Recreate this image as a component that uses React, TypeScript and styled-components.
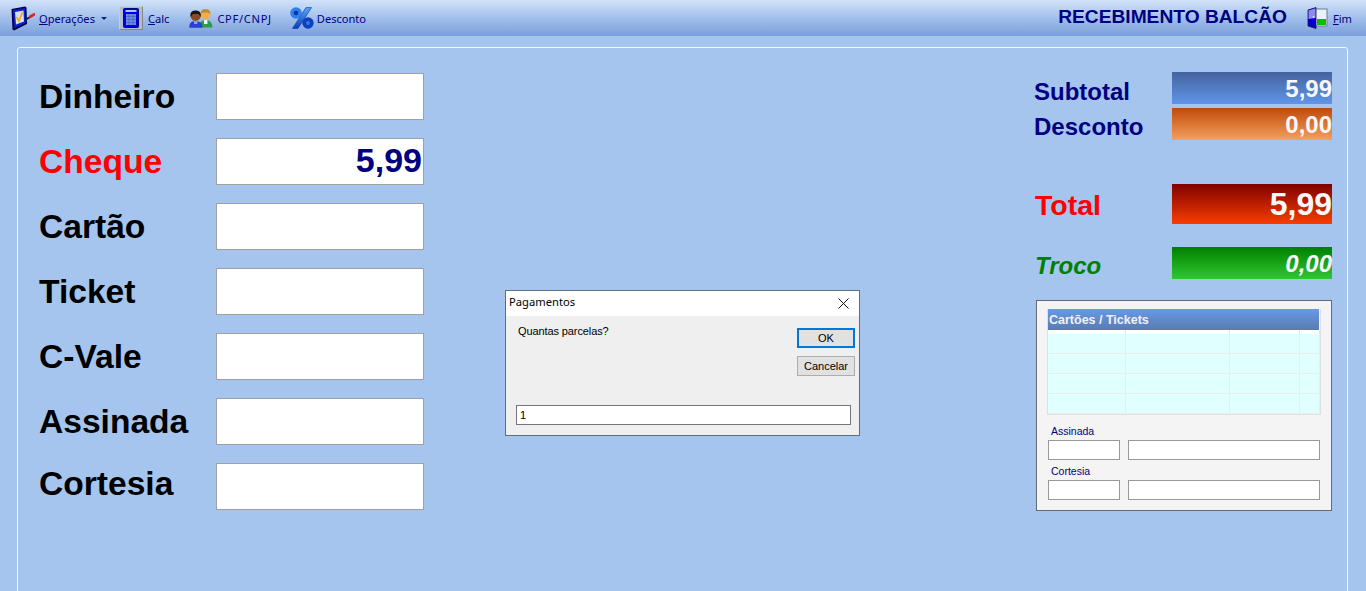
import React from "react";
import styled, { createGlobalStyle } from "styled-components";

const GlobalStyle = createGlobalStyle`
  html, body {
    margin: 0;
    padding: 0;
    background: #a5c5ee;
    overflow: hidden;
  }
`;

const UI_FONT = `"Noto Sans", "Open Sans", sans-serif`;
const BOLD_FONT = `"Liberation Sans", Arial, sans-serif`;

function OperacoesIcon() {
  return (
    <svg width="24" height="25" viewBox="0 0 24 25">
      <path d="M0.5 3 L14 0.5 L15.5 1.5 L16 18 L3 24.5 L1.5 23.5 Z" fill="#04043c" />
      <path d="M2 4 L14 2 L14.5 17 L3.5 22 Z" fill="#0a20d8" />
      <path d="M4 6 L12.5 4.5 L13 15.5 L5 18.5 Z" fill="#d4e0fa" />
      <path d="M5.5 11 L8 15 L11.5 6" fill="none" stroke="#f0b000" strokeWidth="1.7" />
      <path d="M14 14 L20 10.5" stroke="#28183c" strokeWidth="2" />
      <path d="M19.5 10.5 L23 8.5" stroke="#e02828" strokeWidth="2.8" strokeLinecap="round" />
    </svg>
  );
}

function CalcIcon() {
  return (
    <svg width="16" height="20" viewBox="0 0 16 20">
      <rect x="0.5" y="0.5" width="15" height="19" rx="1" fill="#0000e8" stroke="#08087c" />
      <rect x="2.5" y="2" width="11" height="2" fill="#a4c4f4" />
      <rect x="3" y="6" width="10" height="11" fill="#6c8cdc" />
      <path
        d="M3 8.5 H13 M3 11.5 H13 M3 14.5 H13 M6 6 V17 M10 6 V17"
        stroke="#4a64cc"
        strokeWidth="0.8"
      />
    </svg>
  );
}

function PessoasIcon() {
  return (
    <svg width="24" height="19" viewBox="0 0 24 19">
      <circle cx="16.5" cy="5.5" r="5" fill="#eeb04a" />
      <path d="M11.5 5 Q12 -0.5 16.5 0.3 Q21 -0.5 21.5 5 L19 3.5 L14 3.5 Z" fill="#c08a2a" />
      <path d="M10 18.5 Q10 11 16.5 11 Q23.5 11 23.5 18.5 Z" fill="#2f9c48" />
      <rect x="15" y="11" width="3.4" height="4" fill="#f4f4f4" />
      <circle cx="6.6" cy="7" r="5" fill="#8c4a20" />
      <path d="M1.4 8 Q0.6 1 6.6 1.4 Q12.6 1 11.8 8 L9.5 5 L4 5 Z" fill="#20120c" />
      <path d="M0.3 18.8 Q-0.2 12 6.6 12 Q13.6 12 13.4 18.8 Z" fill="#2a40d0" />
      <rect x="5" y="12" width="3.4" height="3" fill="#88a4f0" />
    </svg>
  );
}

function PercentIcon() {
  return (
    <svg width="24" height="22" viewBox="0 0 24 22">
      <defs>
        <linearGradient id="pct" x1="0" y1="0" x2="0" y2="1">
          <stop offset="0" stopColor="#58a8f4" />
          <stop offset="1" stopColor="#0b3cc8" />
        </linearGradient>
      </defs>
      <path d="M16 0.6 L21.5 0.6 L8 21.4 L2.5 21.4 Z" fill="url(#pct)" stroke="#0a2c9c" strokeWidth="0.6" />
      <circle cx="6" cy="6" r="4" fill="#0a2c9c" stroke="#2a82ec" strokeWidth="3.6" />
      <circle cx="18" cy="16" r="3.8" fill="#3a78e0" stroke="#0b40c0" strokeWidth="3.8" />
    </svg>
  );
}

function PortaIcon() {
  return (
    <svg width="21" height="22" viewBox="0 0 21 22">
      <rect x="7" y="2" width="13" height="17" fill="#e8f2f8" stroke="#6a7a90" />
      <rect x="10" y="12" width="9" height="6" fill="#00c000" />
      <path d="M1 3 L9 0.5 L9 21.5 L1 19 Z" fill="#0000d0" stroke="#101048" strokeWidth="0.8" />
      <path d="M1.5 3.4 L8.5 1.2 L8.5 11 L1.5 12 Z" fill="#8c8cea" />
      <circle cx="6.6" cy="9.8" r="0.9" fill="#f0f0ff" />
    </svg>
  );
}

function FecharIcon() {
  return (
    <svg width="11" height="11" viewBox="0 0 11 11">
      <path d="M0.5 0.5 L10.5 10.5 M10.5 0.5 L0.5 10.5" stroke="#111" strokeWidth="1" />
    </svg>
  );
}

const formas = [
  { nome: "Dinheiro", valor: "" },
  { nome: "Cheque", valor: "5,99", ativo: true },
  { nome: "Cartão", valor: "" },
  { nome: "Ticket", valor: "" },
  { nome: "C-Vale", valor: "" },
  { nome: "Assinada", valor: "" },
  { nome: "Cortesia", valor: "", alto: true },
];

export default function App() {
  return (
    <Screen>
      <GlobalStyle />
      <Toolbar>
        <ToolItem>
          <OperacoesIcon />
          <ToolText>
            <u>O</u>perações
          </ToolText>
          <Caret />
        </ToolItem>
        <ToolItem $gap={5}>
          <PressedIcon>
            <CalcIcon />
          </PressedIcon>
          <ToolText>
            <u>C</u>alc
          </ToolText>
        </ToolItem>
        <ToolItem $gap={4} $before={8}>
          <PessoasIcon />
          <ToolText $spread={0.7}>CPF/CNPJ</ToolText>
        </ToolItem>
        <ToolItem $gap={3} $before={6}>
          <PercentIcon />
          <ToolText>Desconto</ToolText>
        </ToolItem>
        <ToolTitle>RECEBIMENTO BALCÃO</ToolTitle>
        <ToolItem $gap={5}>
          <PortaIcon />
          <ToolText>
            <u>F</u>im
          </ToolText>
        </ToolItem>
      </Toolbar>

      <Panel>
        <FormColumn>
          {formas.map((f) => (
            <FormRow key={f.nome}>
              <FormLabel $ativo={f.ativo} $alto={f.alto}>
                {f.nome}
              </FormLabel>
              <FormField>{f.valor}</FormField>
            </FormRow>
          ))}
        </FormColumn>

        <SummaryColumn>
          <SummaryRow $top={0} $h={32}>
            <SummaryLabel $size={24} $color="#000080" $lh={40}>
              Subtotal
            </SummaryLabel>
            <SummaryBar $h={32} $size={24} $from="#44639f" $to="#6095e8">
              5,99
            </SummaryBar>
          </SummaryRow>
          <SummaryRow $top={4} $h={32}>
            <SummaryLabel $size={24} $color="#000080" $lh={38}>
              Desconto
            </SummaryLabel>
            <SummaryBar $h={32} $size={24} $from="#c04a08" $to="#f4a060">
              0,00
            </SummaryBar>
          </SummaryRow>
          <SummaryRow $top={44} $h={40}>
            <SummaryLabel $size={28.5} $color="#ff0000" $lh={42} $indent={1}>
              Total
            </SummaryLabel>
            <SummaryBar $h={40} $size={32} $from="#800000" $to="#f83e00">
              5,99
            </SummaryBar>
          </SummaryRow>
          <SummaryRow $top={23} $h={32}>
            <SummaryLabel $size={24} $color="#008000" $italic $lh={38} $indent={1}>
              Troco
            </SummaryLabel>
            <SummaryBar $h={32} $size={24} $from="#008000" $to="#30c830" $italic>
              0,00
            </SummaryBar>
          </SummaryRow>

          <CardBox>
            <CardGrid>
              <CardHeader>Cartões / Tickets</CardHeader>
              <CardTicks>
                <i />
                <i />
                <i />
                <i />
              </CardTicks>
              {[0, 1, 2, 3].map((r) => (
                <CardRow key={r}>
                  <i />
                  <i />
                  <i />
                  <i />
                </CardRow>
              ))}
            </CardGrid>
            <SmallLabel>Assinada</SmallLabel>
            <SmallFields>
              <SmallInput />
              <SmallInput />
            </SmallFields>
            <SmallLabel>Cortesia</SmallLabel>
            <SmallFields>
              <SmallInput />
              <SmallInput />
            </SmallFields>
          </CardBox>
        </SummaryColumn>
      </Panel>

      <Dialog>
        <DialogTitle>
          <span>Pagamentos</span>
          <FecharIcon />
        </DialogTitle>
        <DialogBody>
          <DialogTop>
            <DialogQuestion>Quantas parcelas?</DialogQuestion>
            <DialogButtons>
              <DialogButton $primary>OK</DialogButton>
              <DialogButton>Cancelar</DialogButton>
            </DialogButtons>
          </DialogTop>
          <DialogInput>1</DialogInput>
        </DialogBody>
      </Dialog>
    </Screen>
  );
}

const Screen = styled.div`
  position: relative;
  width: 1366px;
  height: 591px;
  overflow: hidden;
  background: #a5c5ee;
`;

const Toolbar = styled.div`
  display: flex;
  align-items: center;
  box-sizing: border-box;
  height: 36px;
  padding: 0 14px 0 11px;
  gap: 12px;
  background: linear-gradient(#d2e3f9, #9dbcea 55%, #7b9fdb);
`;

const ToolItem = styled.div<{ $gap?: number; $before?: number }>`
  display: flex;
  align-items: center;
  gap: ${(p) => p.$gap ?? 4}px;
  margin-left: ${(p) => p.$before ?? 0}px;
`;

const ToolText = styled.span<{ $spread?: number }>`
  font: 11.1px ${UI_FONT};
  letter-spacing: ${(p) => p.$spread ?? 0}px;
  color: #000080;
`;

const Caret = styled.span`
  width: 0;
  height: 0;
  margin-left: 2px;
  border-left: 3px solid transparent;
  border-right: 3px solid transparent;
  border-top: 3px solid #10206a;
`;

const PressedIcon = styled.span`
  display: flex;
  align-items: center;
  justify-content: center;
  box-sizing: border-box;
  width: 24px;
  height: 24px;
  background: #b0bccf;
  border: 1px solid;
  border-color: #c4cedd #85898f #85898f #c4cedd;
`;

const ToolTitle = styled.div`
  margin: -2px 8px 0 auto;
  font: bold 19.2px ${BOLD_FONT};
  color: #000080;
`;

const Panel = styled.div`
  display: flex;
  justify-content: space-between;
  box-sizing: border-box;
  width: 1331px;
  height: 560px;
  margin: 11px 0 0 17px;
  padding: 25px 15px 0 21px;
  border: 1px solid #f4f8fd;
  border-radius: 3px 3px 0 0;
`;

const FormColumn = styled.div`
  display: flex;
  flex-direction: column;
  gap: 18px;
`;

const FormRow = styled.div`
  display: flex;
  align-items: center;
`;

const FormLabel = styled.div<{ $ativo?: boolean; $alto?: boolean }>`
  width: 177px;
  padding-bottom: ${(p) => (p.$alto ? 6 : 0)}px;
  font: bold 33.6px ${BOLD_FONT};
  color: ${(p) => (p.$ativo ? "#ff0000" : "#000000")};
`;

const FormField = styled.div`
  box-sizing: border-box;
  width: 208px;
  height: 47px;
  padding-right: 1px;
  border: 1px solid #a0a0a0;
  background: #ffffff;
  font: bold 34px/43px ${BOLD_FONT};
  color: #000080;
  text-align: right;
`;

const SummaryColumn = styled.div`
  display: flex;
  flex-direction: column;
  width: 298px;
  margin-top: -1px;
`;

const SummaryRow = styled.div<{ $top: number; $h: number }>`
  display: flex;
  align-items: flex-start;
  justify-content: space-between;
  height: ${(p) => p.$h}px;
  margin-top: ${(p) => p.$top}px;
`;

const SummaryLabel = styled.div<{
  $size: number;
  $color: string;
  $lh: number;
  $italic?: boolean;
  $indent?: number;
}>`
  padding-left: ${(p) => p.$indent ?? 0}px;
  font: ${(p) => (p.$italic ? "italic" : "normal")} bold ${(p) => p.$size}px/${(p) => p.$lh}px ${BOLD_FONT};
  color: ${(p) => p.$color};
`;

const SummaryBar = styled.div<{
  $h: number;
  $size: number;
  $from: string;
  $to: string;
  $italic?: boolean;
}>`
  width: 160px;
  height: ${(p) => p.$h}px;
  background: linear-gradient(${(p) => p.$from}, ${(p) => p.$to});
  font: ${(p) => (p.$italic ? "italic" : "normal")} bold ${(p) => p.$size}px/${(p) => p.$h + 1}px ${BOLD_FONT};
  color: #f8f8f8;
  text-align: right;
`;

const CardBox = styled.div`
  box-sizing: border-box;
  width: 296px;
  height: 211px;
  margin: 21px 0 0 2px;
  padding: 8px 11px 0;
  border: 1px solid #666a70;
  background: #f4f4f4;
`;

const CardGrid = styled.div`
  box-sizing: border-box;
  width: 274px;
  margin: 0 0 9px -1px;
  border: 2px solid #e0e0e0;
  border-width: 0 1px 1px 1px;
`;

const CardHeader = styled.div`
  box-sizing: border-box;
  width: 271px;
  height: 21px;
  padding-left: 1px;
  background: linear-gradient(#6798ea, #5a7cae);
  font: bold 12.5px/23px ${BOLD_FONT};
  color: #f2f2f2;
`;

const gridColumns = "78px 104px 70px 20px";

const CardTicks = styled.div`
  display: grid;
  grid-template-columns: ${gridColumns};
  width: 272px;
  height: 4px;
  background: #ffffff;

  i {
    border-right: 1px solid #e6e6e6;
  }
`;

const CardRow = styled.div`
  display: grid;
  grid-template-columns: ${gridColumns};
  box-sizing: border-box;
  width: 272px;
  height: 20px;
  background: #e0ffff;
  border-bottom: 1px solid #ececec;

  i {
    border-right: 1px solid #ececec;
  }
`;

const SmallLabel = styled.div`
  height: 16px;
  margin-top: 4px;
  padding-left: 3px;
  font: 10.5px/14px ${BOLD_FONT};
  color: #000080;
`;

const SmallFields = styled.div`
  display: flex;
  gap: 8px;
`;

const SmallInput = styled.div`
  box-sizing: border-box;
  width: 72px;
  height: 20px;
  border: 1px solid #999999;
  background: #ffffff;

  & + & {
    width: 192px;
  }
`;

const Dialog = styled.div`
  position: absolute;
  left: 505px;
  top: 290px;
  display: flex;
  flex-direction: column;
  box-sizing: border-box;
  width: 355px;
  height: 146px;
  border: 1px solid #5f6d7c;
  background: #efefef;
  font: 11px ${BOLD_FONT};
  color: #000000;
`;

const DialogTitle = styled.div`
  display: flex;
  align-items: center;
  justify-content: space-between;
  height: 25px;
  padding: 0 10px 0 3px;
  background: #ffffff;
  font: 11.2px ${UI_FONT};

  span {
    margin-top: -4px;
  }
`;

const DialogBody = styled.div`
  display: flex;
  flex-direction: column;
  flex: 1;
  padding: 12px 4px 10px 10px;
`;

const DialogTop = styled.div`
  display: flex;
  justify-content: space-between;
  flex: 1;
`;

const DialogQuestion = styled.div`
  margin-top: -4px;
  padding-left: 2px;
  line-height: 14px;
  letter-spacing: -0.1px;
`;

const DialogButtons = styled.div`
  display: flex;
  flex-direction: column;
  gap: 8px;
`;

const DialogButton = styled.div<{ $primary?: boolean }>`
  box-sizing: border-box;
  width: 58px;
  height: 20px;
  border: ${(p) => (p.$primary ? "2px solid #0078d7" : "1px solid #adadad")};
  background: #e1e1e1;
  line-height: ${(p) => (p.$primary ? 16 : 18)}px;
  text-align: center;
`;

const DialogInput = styled.div`
  box-sizing: border-box;
  width: 335px;
  height: 20px;
  padding-left: 3px;
  border: 1px solid #767676;
  background: #ffffff;
  line-height: 18px;
`;
